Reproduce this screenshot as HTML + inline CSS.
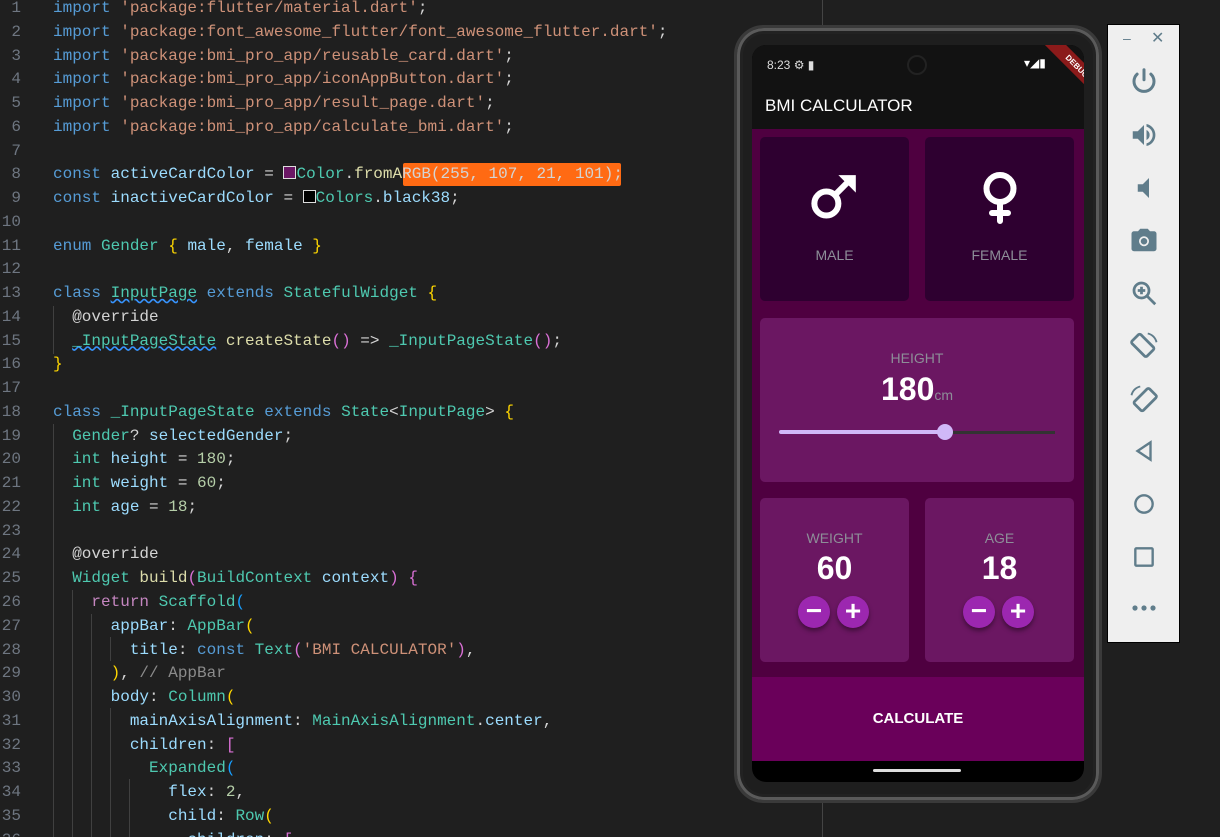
<!DOCTYPE html>
<html><head><meta charset="utf-8"><style>
*{margin:0;padding:0;box-sizing:border-box}
html{width:1220px;height:837px;overflow:hidden}
body{width:1220px;height:837px;background:#1f1f1f;overflow:hidden;position:relative;font-family:"Liberation Sans",sans-serif}
.code{position:absolute;left:0;top:-3px;font-family:"Liberation Mono",monospace;font-size:16px;line-height:23.76px;white-space:pre;color:#d4d4d4}
.ln{position:absolute;left:0;width:21px;text-align:right;color:#6e7681}
.tx{position:absolute;left:53px}
.k{color:#569cd6}.s{color:#ce9178}.t{color:#4ec9b0}.v{color:#9cdcfe}.f{color:#dcdcaa}.n{color:#b5cea8}.y{color:#ffd700}.p{color:#da70d6}.b{color:#179fff}.r{color:#c586c0}
.g{position:absolute;width:1px;background:#404040}
.abs{position:absolute}
.card{position:absolute;border-radius:5px}
.lbl{position:absolute;width:100%;text-align:center;color:#8d8e98;font-size:14px}
.num{position:absolute;width:100%;text-align:center;color:#fff;font-size:32px;font-weight:bold}
.btn{position:absolute;width:32px;height:32px;border-radius:50%;background:#9c27b0;box-shadow:0 3px 5px rgba(0,0,0,.4);color:#fff;text-align:center;font-size:28px;line-height:30px;font-weight:bold}
</style></head><body>
<div class="g" style="left:822px;top:0;height:25px;background:#444"></div>
<div class="g" style="left:822px;top:802px;height:35px;background:#444"></div>
<div class="g" style="left:53px;top:306px;height:48px"></div>
<div class="g" style="left:53px;top:424px;height:413px"></div>
<div class="g" style="left:72px;top:590px;height:247px"></div>
<div class="g" style="left:91px;top:614px;height:223px"></div>
<div class="g" style="left:110px;top:637px;height:24px"></div>
<div class="g" style="left:110px;top:708px;height:129px"></div>
<div class="g" style="left:129px;top:779px;height:58px"></div>
<div class="abs" style="left:403px;top:163px;width:218px;height:23px;background:#ff6a13;border-radius:2px"></div>
<div class="code">
<div class="ln" style="top:0">1</div><div class="tx" style="top:0"><span class="k">import</span> <span class="s">'package:flutter/material.dart'</span>;</div>
<div class="ln" style="top:23.76px">2</div><div class="tx" style="top:23.76px"><span class="k">import</span> <span class="s">'package:font_awesome_flutter/font_awesome_flutter.dart'</span>;</div>
<div class="ln" style="top:47.52px">3</div><div class="tx" style="top:47.52px"><span class="k">import</span> <span class="s">'package:bmi_pro_app/reusable_card.dart'</span>;</div>
<div class="ln" style="top:71.28px">4</div><div class="tx" style="top:71.28px"><span class="k">import</span> <span class="s">'package:bmi_pro_app/iconAppButton.dart'</span>;</div>
<div class="ln" style="top:95.04px">5</div><div class="tx" style="top:95.04px"><span class="k">import</span> <span class="s">'package:bmi_pro_app/result_page.dart'</span>;</div>
<div class="ln" style="top:118.8px">6</div><div class="tx" style="top:118.8px"><span class="k">import</span> <span class="s">'package:bmi_pro_app/calculate_bmi.dart'</span>;</div>
<div class="ln" style="top:142.56px">7</div>
<div class="ln" style="top:166.32px">8</div><div class="tx" style="top:166.32px"><span class="k">const</span> <span class="v">activeCardColor</span> = <span style="display:inline-block;width:13px;height:13px;background:#6b1765;border:1px solid #ddd;vertical-align:-1px"></span><span class="t">Color</span>.<span class="f">fromA</span>RGB(255, 107, 21, 101);</div>
<div class="ln" style="top:190.08px">9</div><div class="tx" style="top:190.08px"><span class="k">const</span> <span class="v">inactiveCardColor</span> = <span style="display:inline-block;width:13px;height:13px;background:#000;border:1px solid #ddd;vertical-align:-1px"></span><span class="t">Colors</span>.<span class="v">black38</span>;</div>
<div class="ln" style="top:213.84px">10</div>
<div class="ln" style="top:237.6px">11</div><div class="tx" style="top:237.6px"><span class="k">enum</span> <span class="t">Gender</span> <span class="y">{</span> <span class="v">male</span>, <span class="v">female</span> <span class="y">}</span></div>
<div class="ln" style="top:261.36px">12</div>
<div class="ln" style="top:285.12px">13</div><div class="tx" style="top:285.12px"><span class="k">class</span> <span class="t" style="text-decoration:underline wavy #3794ff">InputPage</span> <span class="k">extends</span> <span class="t">StatefulWidget</span> <span class="y">{</span></div>
<div class="ln" style="top:308.88px">14</div><div class="tx" style="top:308.88px">  @override</div>
<div class="ln" style="top:332.64px">15</div><div class="tx" style="top:332.64px">  <span class="t" style="text-decoration:underline wavy #3794ff">_InputPageState</span> <span class="f">createState</span><span class="p">()</span> =&gt; <span class="t">_InputPageState</span><span class="p">()</span>;</div>
<div class="ln" style="top:356.4px">16</div><div class="tx" style="top:356.4px"><span class="y">}</span></div>
<div class="ln" style="top:380.16px">17</div>
<div class="ln" style="top:403.92px">18</div><div class="tx" style="top:403.92px"><span class="k">class</span> <span class="t">_InputPageState</span> <span class="k">extends</span> <span class="t">State</span>&lt;<span class="t">InputPage</span>&gt; <span class="y">{</span></div>
<div class="ln" style="top:427.68px">19</div><div class="tx" style="top:427.68px">  <span class="t">Gender</span>? <span class="v">selectedGender</span>;</div>
<div class="ln" style="top:451.44px">20</div><div class="tx" style="top:451.44px">  <span class="t">int</span> <span class="v">height</span> = <span class="n">180</span>;</div>
<div class="ln" style="top:475.2px">21</div><div class="tx" style="top:475.2px">  <span class="t">int</span> <span class="v">weight</span> = <span class="n">60</span>;</div>
<div class="ln" style="top:498.96px">22</div><div class="tx" style="top:498.96px">  <span class="t">int</span> <span class="v">age</span> = <span class="n">18</span>;</div>
<div class="ln" style="top:522.72px">23</div>
<div class="ln" style="top:546.48px">24</div><div class="tx" style="top:546.48px">  @override</div>
<div class="ln" style="top:570.24px">25</div><div class="tx" style="top:570.24px">  <span class="t">Widget</span> <span class="f">build</span><span class="p">(</span><span class="t">BuildContext</span> <span class="v">context</span><span class="p">)</span> <span class="p">{</span></div>
<div class="ln" style="top:594px">26</div><div class="tx" style="top:594px">    <span class="r">return</span> <span class="t">Scaffold</span><span class="b">(</span></div>
<div class="ln" style="top:617.76px">27</div><div class="tx" style="top:617.76px">      <span class="v">appBar</span>: <span class="t">AppBar</span><span class="y">(</span></div>
<div class="ln" style="top:641.52px">28</div><div class="tx" style="top:641.52px">        <span class="v">title</span>: <span class="k">const</span> <span class="t">Text</span><span class="p">(</span><span class="s">'BMI CALCULATOR'</span><span class="p">)</span>,</div>
<div class="ln" style="top:665.28px">29</div><div class="tx" style="top:665.28px">      <span class="y">)</span>, <span style="color:#8b8b8b">// AppBar</span></div>
<div class="ln" style="top:689.04px">30</div><div class="tx" style="top:689.04px">      <span class="v">body</span>: <span class="t">Column</span><span class="y">(</span></div>
<div class="ln" style="top:712.8px">31</div><div class="tx" style="top:712.8px">        <span class="v">mainAxisAlignment</span>: <span class="t">MainAxisAlignment</span>.<span class="v">center</span>,</div>
<div class="ln" style="top:736.56px">32</div><div class="tx" style="top:736.56px">        <span class="v">children</span>: <span class="p">[</span></div>
<div class="ln" style="top:760.32px">33</div><div class="tx" style="top:760.32px">          <span class="t">Expanded</span><span class="b">(</span></div>
<div class="ln" style="top:784.08px">34</div><div class="tx" style="top:784.08px">            <span class="v">flex</span>: <span class="n">2</span>,</div>
<div class="ln" style="top:807.84px">35</div><div class="tx" style="top:807.84px">            <span class="v">child</span>: <span class="t">Row</span><span class="y">(</span></div>
<div class="ln" style="top:831.6px">36</div><div class="tx" style="top:831.6px">              <span class="v">children</span>: <span class="p">[</span></div>
</div>

<!-- phone -->
<div class="abs" style="left:734px;top:25px;width:368px;height:778px;border-radius:30px;background:#1e1e1e;border:3px solid #3a3a3a;box-shadow:inset 0 0 0 3px #5a5a5a,inset 0 0 0 6px #222"></div>
<div class="abs" style="left:752px;top:45px;width:332px;height:737px;border-radius:14px;background:#000;overflow:hidden">
  <div class="abs" style="left:0;top:0;width:332px;height:84px;background:#121212"></div>
  <div class="abs" style="left:15px;top:13px;color:#ddd;font-size:12px">8:23 ⚙ ▮</div>
  <div class="abs" style="left:155px;top:10px;width:20px;height:20px;border-radius:50%;background:#111;border:2px solid #222"></div>
  <div class="abs" style="left:272px;top:11px;color:#fff;font-size:12px">▾◢▮</div>
  <div class="abs" style="left:280px;top:14px;width:90px;height:15px;background:#8b1a1a;transform:rotate(45deg);color:#fff;font-size:8px;font-weight:bold;text-align:center;line-height:15px">DEBUG</div>
  <div class="abs" style="left:13px;top:51px;color:#fff;font-size:17px">BMI CALCULATOR</div>
  <div class="abs" style="left:0;top:84px;width:332px;height:548px;background:#4f0040"></div>
  <div class="card" style="left:8px;top:92px;width:149px;height:164px;background:#2e0030">
    <svg class="abs" style="left:50px;top:36px" width="48" height="48" viewBox="0 0 44 44"><circle cx="15" cy="28" r="11" fill="none" stroke="#fff" stroke-width="5.5"/><path d="M23 20 L36 7" stroke="#fff" stroke-width="5.5"/><path d="M26 2 H42 V18 Z" fill="#fff"/></svg>
    <div class="lbl" style="top:110px">MALE</div>
  </div>
  <div class="card" style="left:173px;top:92px;width:149px;height:164px;background:#2e0030">
    <svg class="abs" style="left:55px;top:35px" width="40" height="52" viewBox="0 0 40 52"><circle cx="20" cy="16.5" r="13.5" fill="none" stroke="#fff" stroke-width="6"/><path d="M20 30 V49 M12 41 H28" stroke="#fff" stroke-width="6" stroke-linecap="round"/></svg>
    <div class="lbl" style="top:110px">FEMALE</div>
  </div>
  <div class="card" style="left:8px;top:273px;width:314px;height:164px;background:#6b1762">
    <div class="lbl" style="top:32px">HEIGHT</div>
    <div class="abs" style="left:0;width:100%;top:53px;text-align:center;color:#fff"><span style="font-size:32px;font-weight:bold">180</span><span style="font-size:14px;color:#8d8e98">cm</span></div>
    <div class="abs" style="left:19px;top:112px;width:166px;height:4px;border-radius:2px;background:#d0b8f8"></div>
    <div class="abs" style="left:185px;top:113px;width:110px;height:3px;background:#333"></div>
    <div class="abs" style="left:177px;top:106px;width:16px;height:16px;border-radius:50%;background:#d0b8f8"></div>
  </div>
  <div class="card" style="left:8px;top:453px;width:149px;height:164px;background:#6b1762">
    <div class="lbl" style="top:32px">WEIGHT</div>
    <div class="num" style="top:52px">60</div>
    <div class="btn" style="left:38px;top:98px">−</div><div class="btn" style="left:77px;top:98px">+</div>
  </div>
  <div class="card" style="left:173px;top:453px;width:149px;height:164px;background:#6b1762">
    <div class="lbl" style="top:32px">AGE</div>
    <div class="num" style="top:52px">18</div>
    <div class="btn" style="left:38px;top:98px">−</div><div class="btn" style="left:77px;top:98px">+</div>
  </div>
  <div class="abs" style="left:0;top:632px;width:332px;height:84px;background:#6a005a;color:#fff;font-weight:bold;font-size:15px;text-align:center;line-height:84px">CALCULATE</div>
  <div class="abs" style="left:121px;top:724px;width:88px;height:3px;border-radius:2px;background:#ddd"></div>
</div>

<!-- emulator panel -->
<div class="abs" style="left:1107px;top:24px;width:73px;height:619px;background:#efefef;border:1px solid #000">
  <div class="abs" style="left:15px;top:5px;color:#607d8b;font-size:14px">–</div>
  <div class="abs" style="left:43px;top:3px;color:#607d8b;font-size:16px">✕</div>
  <svg class="abs" style="left:21px;top:41px" width="30" height="30" viewBox="0 0 24 24" fill="none" stroke="#607d8b" stroke-width="2.4" stroke-linecap="round"><path d="M12 3v8"/><path d="M6.5 6.5a8 8 0 1 0 11 0"/></svg>
  <svg class="abs" style="left:21px;top:95px" width="30" height="30" viewBox="0 0 24 24" fill="#607d8b"><path d="M3 9v6h4l5 5V4L7 9z"/><path d="M16.5 12A4.5 4.5 0 0 0 14 8v8a4.5 4.5 0 0 0 2.5-4z"/><path d="M14 3.2v2.1a7 7 0 0 1 0 13.4v2.1a9 9 0 0 0 0-17.6z"/></svg>
  <svg class="abs" style="left:21px;top:148px" width="30" height="30" viewBox="0 0 24 24" fill="#607d8b"><path d="M7 9v6h4l5 5V4l-5 5z"/></svg>
  <svg class="abs" style="left:21px;top:200px" width="30" height="30" viewBox="0 0 24 24" fill="#607d8b"><path d="M9 3L7.2 5H4a2 2 0 0 0-2 2v12a2 2 0 0 0 2 2h16a2 2 0 0 0 2-2V7a2 2 0 0 0-2-2h-3.2L15 3z"/><circle cx="12" cy="13" r="4" fill="#efefef"/><circle cx="12" cy="13" r="2.6"/></svg>
  <svg class="abs" style="left:21px;top:253px" width="30" height="30" viewBox="0 0 24 24" fill="none" stroke="#607d8b" stroke-width="2.2"><circle cx="10" cy="10" r="6"/><path d="M14.5 14.5L21 21M10 7v6M7 10h6"/></svg>
  <svg class="abs" style="left:21px;top:306px" width="30" height="30" viewBox="0 0 24 24" fill="none" stroke="#607d8b" stroke-width="2.2"><rect x="6" y="3" width="10" height="17" rx="1.5" transform="rotate(-45 11 11.5)"/><path d="M15 2a9 9 0 0 1 7 7" stroke-width="1.5"/></svg>
  <svg class="abs" style="left:21px;top:359px" width="30" height="30" viewBox="0 0 24 24" fill="none" stroke="#607d8b" stroke-width="2.2"><rect x="8" y="4" width="10" height="17" rx="1.5" transform="rotate(45 13 12.5)"/><path d="M9 2a9 9 0 0 0-7 7" stroke-width="1.5"/></svg>
  <svg class="abs" style="left:23px;top:413px" width="26" height="26" viewBox="0 0 24 24" fill="none" stroke="#607d8b" stroke-width="2.2"><path d="M18 4v16L6 12z"/></svg>
  <svg class="abs" style="left:23px;top:466px" width="26" height="26" viewBox="0 0 24 24" fill="none" stroke="#607d8b" stroke-width="2.2"><circle cx="12" cy="12" r="8"/></svg>
  <svg class="abs" style="left:23px;top:519px" width="26" height="26" viewBox="0 0 24 24" fill="none" stroke="#607d8b" stroke-width="2.2"><rect x="4" y="4" width="16" height="16" rx="1"/></svg>
  <svg class="abs" style="left:24px;top:580px" width="24" height="6" viewBox="0 0 24 6" fill="#607d8b"><circle cx="3" cy="3" r="2.6"/><circle cx="12" cy="3" r="2.6"/><circle cx="21" cy="3" r="2.6"/></svg>
</div>
</body></html>
